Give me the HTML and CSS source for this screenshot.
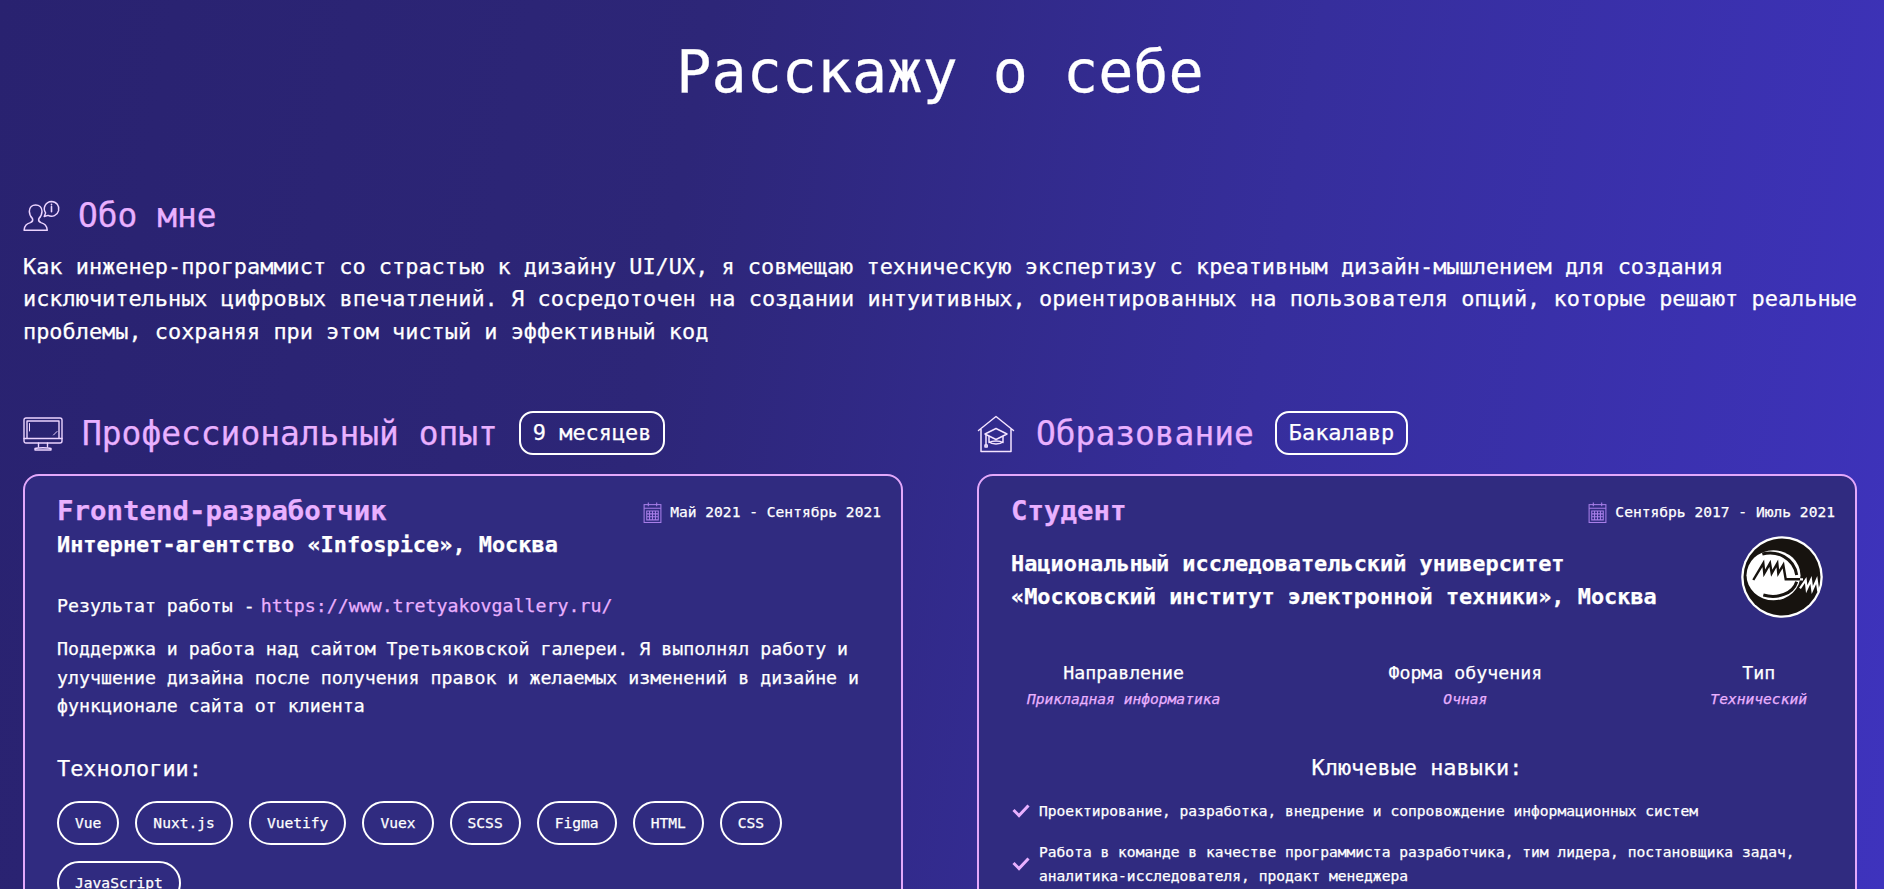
FILE: index.html
```html
<!DOCTYPE html>
<html lang="ru">
<head>
<meta charset="utf-8">
<title>Обо мне</title>
<link rel="stylesheet" href="styles.css">
</head>
<body>
<main class="page">
  <h1 class="title">Расскажу о себе</h1>

  <section class="about">
    <h2 class="heading heading-small">
      <svg class="icon-about" viewBox="0 0 36 30" fill="none" stroke="currentColor" stroke-width="1.4" stroke-linejoin="round" stroke-linecap="round">
        <path d="M9 17.5C6.5 15 6 12.5 6 10.500C6 6.500 8.800 4.500 12 4.500C15.200 4.500 18 6.500 18 10.500C18 12.500 17.500 15 15 17.500C14.500 19 15 20.500 17 21.300C20.500 22.500 22.500 23.500 23 28.500H1C1.500 23.500 3.500 22.500 7 21.300C9 20.500 9.500 19 9 17.500Z"/>
        <path d="M27 1.200a7 7 0 1 1-3.300 13.200l-3.600 1 1.300-3.300A7 7 0 0 1 27 1.200Z"/>
        <path d="M27 6v5M27 3.900v.4" stroke-width="1.500"/>
      </svg>
      <span>Обо мне</span>
    </h2>
    <p class="about-text">Как инженер-программист со страстью к дизайну UI/UX, я совмещаю техническую экспертизу с креативным дизайн-мышлением для создания<br>исключительных цифровых впечатлений. Я сосредоточен на создании интуитивных, ориентированных на пользователя опций, которые решают реальные проблемы, сохраняя при этом чистый и эффективный код</p>
  </section>

  <div class="columns">
    <section class="column">
      <h2 class="heading">
        <svg class="icon-section" viewBox="0 0 40 34" fill="none" stroke="currentColor" stroke-width="1.400" stroke-linejoin="round" stroke-linecap="round">
          <rect x="1" y="1" width="38" height="25" rx="2"/>
          <path d="M1 21.500H39M4 4H36V21.500M4 4V21.500M15.500 26V29.500M24.500 26V29.500M12 33H28V31.500C25 30.500 15 30.500 12 31.500Z"/>
          <path d="M6.500 6.500V14M32 16.500l2-2M30.500 18l1-1" stroke-width="1"/>
        </svg>
        <span>Профессиональный опыт</span>
        <span class="badge">9 месяцев</span>
      </h2>
      <article class="card">
        <div class="card-top">
          <h3 class="role">Frontend-разработчик</h3>
          <div class="dates">
            <svg class="icon-cal" viewBox="0 0 18 20" fill="none" stroke="currentColor" stroke-width="1"><rect x="1" y="2.500" width="16" height="17"/><path d="M1 6H17M5 .5V4M13 .5V4M3.500 8.500H14.500V17H3.500ZM3.500 11.300H14.500M3.500 14.100H14.500M6.200 8.500V17M9 8.500V17M11.800 8.500V17"/></svg>
            <span>Май 2021 - Сентябрь 2021</span>
          </div>
        </div>
        <p class="org">Интернет-агентство «Infospice», Москва</p>
        <p class="result">Результат работы - <a class="link" href="#">https://www.tretyakovgallery.ru/</a></p>
        <p class="desc">Поддержка и работа над сайтом Третьяковской галереи. Я выполнял работу и улучшение дизайна после получения правок и желаемых изменений в дизайне и функционале сайта от клиента</p>
        <h4 class="sub">Технологии:</h4>
        <ul class="chips">
          <li class="chip">Vue</li>
          <li class="chip">Nuxt.js</li>
          <li class="chip">Vuetify</li>
          <li class="chip">Vuex</li>
          <li class="chip">SCSS</li>
          <li class="chip">Figma</li>
          <li class="chip">HTML</li>
          <li class="chip">CSS</li>
          <li class="chip">JavaScript</li>
        </ul>
      </article>
    </section>

    <section class="column">
      <h2 class="heading">
        <svg class="icon-home" viewBox="0 0 38 38" fill="none" stroke="currentColor" stroke-width="1.500" stroke-linejoin="round" stroke-linecap="round">
          <path d="M1.500 15.500L19 1.500L36.500 15.500M4 13.500V36.500H34V13.500"/>
          <path d="M8 19L19 13.500L30 19L19 24.500Z"/>
          <path d="M12 21.500V27C15 29.500 23 29.500 26 27V21.500M12 27.500C15 25.500 23 25.500 26 27.500"/>
          <path d="M9 19.500V30M8 30H10.200V32H8Z"/>
        </svg>
        <span>Образование</span>
        <span class="badge">Бакалавр</span>
      </h2>
      <article class="card">
        <div class="card-top">
          <h3 class="role">Студент</h3>
          <div class="dates">
            <svg class="icon-cal" viewBox="0 0 18 20" fill="none" stroke="currentColor" stroke-width="1"><rect x="1" y="2.500" width="16" height="17"/><path d="M1 6H17M5 .5V4M13 .5V4M3.500 8.500H14.500V17H3.500ZM3.500 11.300H14.500M3.500 14.100H14.500M6.200 8.500V17M9 8.500V17M11.800 8.500V17"/></svg>
            <span>Сентябрь 2017 - Июль 2021</span>
          </div>
        </div>
        <div class="uni">
          <p class="uni-name">Национальный исследовательский университет<br>«Московский институт электронной техники», Москва</p>
          <svg class="logo" viewBox="0 0 82 82">
            <circle cx="41" cy="41" r="40.800" fill="#fff"/>
            <circle cx="41" cy="41" r="38.500" fill="#17130f"/>
            <ellipse cx="32.500" cy="39.300" rx="27" ry="25" fill="#fff"/>
            <path d="M21.300 18C36 14 53 22 55.700 39M55.700 45.700C52 58 36 63 22.300 59" fill="none" stroke="#17130f" stroke-width="3"/>
            <path d="M12.300 44L22.300 27.300L23.300 37.300L29 27.300L30.700 37.300L36.300 27.300L37.300 37.300L42.300 29L44.700 43.300H59" fill="none" stroke="#17130f" stroke-width="2.400"/>
            <path d="M59 43.300H62M59 52.300L64.700 44L65.700 53.300L70 44L71.300 54L75.700 44L77.300 55.700" fill="none" stroke="#fff" stroke-width="2.200"/>
          </svg>
        </div>
        <div class="facts">
          <div class="fact"><span class="fact-label">Направление</span><em class="fact-value">Прикладная информатика</em></div>
          <div class="fact"><span class="fact-label">Форма обучения</span><em class="fact-value">Очная</em></div>
          <div class="fact"><span class="fact-label">Тип</span><em class="fact-value">Технический</em></div>
        </div>
        <h4 class="sub sub-center">Ключевые навыки:</h4>
        <ul class="skills">
          <li class="skill">
            <svg class="check" viewBox="0 0 18 14" fill="none" stroke="currentColor" stroke-width="3"><path d="M1.500 6L7 11.500L16.500 1.500"/></svg>
            <span>Проектирование, разработка, внедрение и сопровождение информационных систем</span>
          </li>
          <li class="skill">
            <svg class="check" viewBox="0 0 18 14" fill="none" stroke="currentColor" stroke-width="3"><path d="M1.500 6L7 11.500L16.500 1.500"/></svg>
            <span>Работа в команде в качестве программиста разработчика, тим лидера, постановщика задач, аналитика-исследователя, продакт менеджера</span>
          </li>
        </ul>
      </article>
    </section>
  </div>
</main>
</body>
</html>
```
FILE: styles.css
```css
* { box-sizing: border-box; }
html, body { margin: 0; height: 100%; overflow: hidden; }
body {
  font-family: "DejaVu Sans Mono", monospace;
  color: #fff;
  background: linear-gradient(100deg, #292270 0%, #2d2678 35%, #362e9c 65%, #3e33bd 100%);
  -webkit-text-stroke: 0.25px currentColor;
}
h1, h2, h3, h4, p, ul { margin: 0; padding: 0; }
ul { list-style: none; }

.page { height: 100vh; overflow: hidden; padding: 36px 27px 0 23px; }

.title { font-size: 58.400px; font-weight: 400; line-height: 72px; text-align: center; margin-bottom: 86px; }

.heading {
  display: flex; align-items: center; gap: 19px;
  font-size: 32.900px; font-weight: 400; line-height: 44px; color: #e9b0ff;
}
.heading-small { gap: 17px; margin-bottom: 13px; }
.about-text { font-size: 21.900px; line-height: 32.400px; text-align: justify; }
.about { margin-bottom: 64px; }

.icon-about { width: 38px; height: 32px; color: #ecd4ff; }
.icon-section { width: 40px; height: 34px; color: #ecd4ff; }
.icon-home { width: 38px; height: 38px; color: #f4e4ff; margin-right: 2px; }

.badge {
  font-size: 21.900px; line-height: 40px; color: #fff;
  border: 2px solid #fff; border-radius: 14px; padding: 0 12px; margin: 0 0 3px 2px;
}

.columns { display: grid; grid-template-columns: 880px 880px; gap: 74px; }
.column .heading { height: 44px; margin-bottom: 18px; }

.card {
  height: 700px;
  background: #302b80;
  border: 2px solid #e3a8fb;
  border-radius: 16px;
  padding: 17px 20px 0 32px;
}
.card-top { display: flex; justify-content: space-between; align-items: flex-start; }
.role { font-size: 27.400px; font-weight: 700; line-height: 36px; color: #e9b0ff; }
.dates { display: flex; align-items: center; gap: 8px; font-size: 14.600px; line-height: 22px; margin-top: 8px; }
.icon-cal { width: 19px; height: 21px; color: #a77ee8; }

.org { font-size: 21.900px; font-weight: 700; line-height: 30px; margin-top: 1px; }
.result { font-size: 18.250px; line-height: 28px; margin-top: 32px; }
.link { color: #e9b0ff; text-decoration: none; margin-left: -5px; }
.desc { font-size: 18.250px; line-height: 28.500px; margin-top: 15px; }
.sub { font-size: 21.900px; font-weight: 400; line-height: 30px; margin-top: 33px; }
.sub-center { text-align: center; padding-right: 12px; }

.chips { display: flex; flex-wrap: wrap; gap: 16px; margin-top: 17px; }
.chip {
  font-size: 14.600px; line-height: 40px; height: 44px;
  border: 2px solid #fff; border-radius: 22px; padding: 0 16px;
}

.uni { display: flex; justify-content: space-between; align-items: flex-start; padding-right: 12px; margin-top: 7px; }
.uni-name { font-size: 21.900px; font-weight: 700; line-height: 32.400px; margin-top: 12px; }
.logo { width: 82px; height: 82px; flex: none; }

.facts { display: flex; justify-content: space-between; padding: 0 28px 0 16px; margin-top: 43px; }
.fact { display: flex; flex-direction: column; align-items: center; gap: 4px; }
.fact-label { font-size: 18.250px; line-height: 24px; }
.fact-value { font-size: 14.600px; line-height: 20px; color: #e9b0ff; }
.facts + .sub { margin-top: 44px; }

.skills { display: flex; flex-direction: column; gap: 16px; margin-top: 16px; }
.skill { display: flex; align-items: center; gap: 9px; font-size: 14.600px; line-height: 24.500px; padding-left: 1px; }
.check { width: 18px; height: 14px; flex: none; color: #e9b0ff; }
```
